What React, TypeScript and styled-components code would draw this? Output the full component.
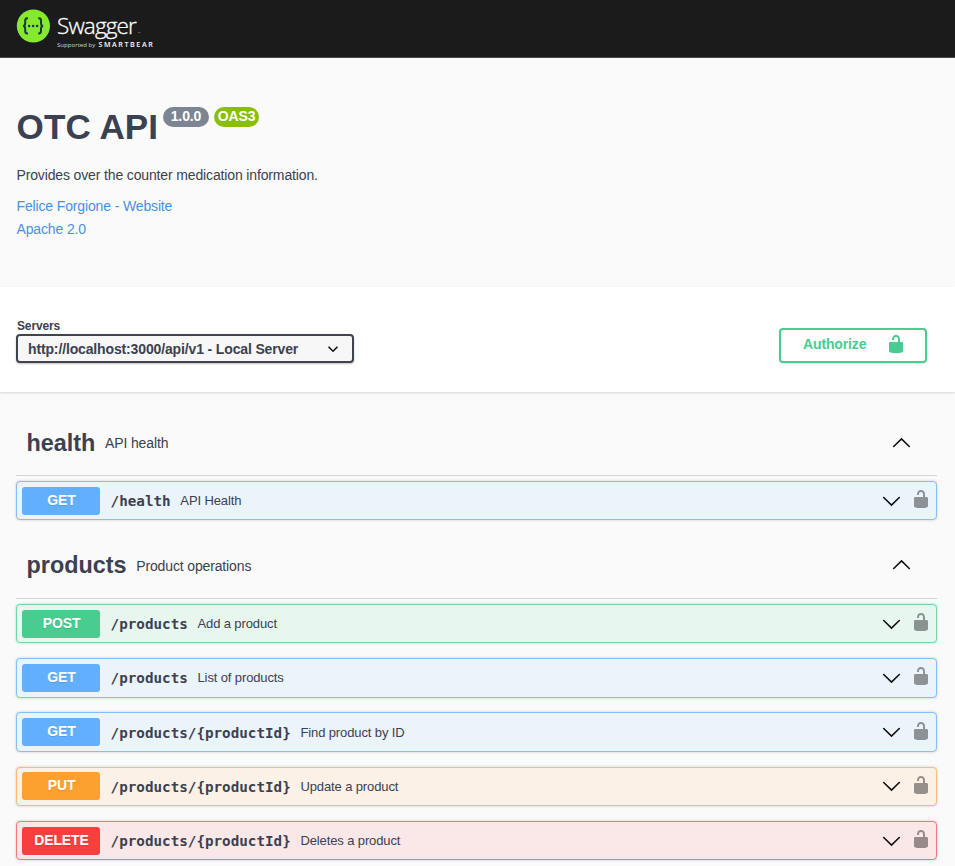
import React from "react";
import styled, { createGlobalStyle } from "styled-components";

const GlobalStyle = createGlobalStyle`
  *, *::before, *::after { box-sizing: border-box; }
  body {
    margin: 0;
    background: #fafafa;
    color: #3b4151;
    font-family: "Liberation Sans", Arial, sans-serif;
    overflow: hidden;
  }
`;

const Page = styled.div`
  height: 866px;
  overflow: hidden;
`;

const Topbar = styled.header`
  display: flex;
  height: 58px;
  padding: 9px 0 0 16px;
  background: #1b1b1b;
  border-bottom: 1px solid #4a474a;
`;

const Brand = styled.div`
  margin-left: 7px;
  font-family: "Open Sans", "Noto Sans", sans-serif;
  color: #fff;
  white-space: nowrap;
`;

const BrandName = styled.div`
  display: flex;
  align-items: baseline;
  height: 30px;
  font-size: 22.5px;
  font-weight: 300;
  line-height: 33px;
  letter-spacing: -0.85px;
  -webkit-text-stroke: 0.3px #fff;
`;

const Trademark = styled.span`
  margin-left: 2px;
  font-size: 3px;
  line-height: 3px;
  letter-spacing: 0;
  -webkit-text-stroke: 0;
`;

const Tagline = styled.div`
  display: flex;
  align-items: baseline;
  gap: 3px;
  font-size: 6px;
  line-height: 10px;
  letter-spacing: 0.05px;
  color: #d6d6d6;

  b {
    font-size: 7.1px;
    font-weight: 600;
    letter-spacing: 1.6px;
    color: #fff;
  }
`;

const Info = styled.section`
  height: 229px;
  padding: 48px 16px 0 16.5px;
`;

const TitleRow = styled.div`
  display: flex;
  height: 59px;
`;

const Title = styled.h1`
  width: 141.5px;
  margin: 0;
  font-size: 35.1px;
  line-height: 42px;
  letter-spacing: 0.1px;
  white-space: nowrap;
`;

const Badge = styled.span<{ $color: string; $width: number }>`
  width: ${(p) => p.$width}px;
  height: 20px;
  margin: 1px 0 0 5px;
  border-radius: 10px;
  background: ${(p) => p.$color};
  color: #fff;
  font-size: 14px;
  font-weight: 700;
  line-height: 18px;
  letter-spacing: -0.1px;
  text-align: center;
`;

const Description = styled.p`
  margin: 0 0 12px;
  font-size: 14px;
  line-height: 20px;
  letter-spacing: -0.14px;
`;

const InfoLink = styled.a`
  display: block;
  height: 23px;
  color: #4990e2;
  font-size: 14px;
  line-height: 18px;
  letter-spacing: -0.14px;
`;

const SchemeBar = styled.section`
  display: flex;
  justify-content: space-between;
  height: 105px;
  padding: 32px 28px 0 17px;
  background: #fff;
  box-shadow: 0 1px 2px rgba(0, 0, 0, 0.15);
`;

const Servers = styled.div`
  font-size: 12px;
  font-weight: 700;
  line-height: 14px;
  letter-spacing: -0.15px;
`;

const ServerSelect = styled.div`
  display: flex;
  align-items: center;
  justify-content: space-between;
  width: 338px;
  height: 29px;
  margin: 1px 0 0 -1px;
  padding: 1px 14px 0 10px;
  border: 2px solid #41444e;
  border-radius: 4px;
  background: #f7f7f7;
  box-shadow: 0 1px 2px rgba(0, 0, 0, 0.25);
  font-size: 14px;
  letter-spacing: -0.14px;
`;

const AuthorizeButton = styled.button`
  display: flex;
  align-items: flex-start;
  justify-content: space-between;
  width: 148px;
  height: 35px;
  margin-top: 9px;
  padding: 5px 22px 0 22px;
  border: 2px solid #49cc90;
  border-radius: 4px;
  background: #fff;
  box-shadow: 0 1px 2px rgba(0, 0, 0, 0.1);
  color: #49cc90;
  font: 700 14px/19px "Liberation Sans", Arial, sans-serif;
  letter-spacing: -0.14px;
`;

const Groups = styled.main`
  padding: 17px 18px 0 16px;
`;

const Group = styled.section`
  margin-bottom: 11.7px;
`;

const GroupHeader = styled.h2`
  display: flex;
  align-items: center;
  height: 67px;
  margin: 0 0 5px;
  padding: 0 26px 0 10.5px;
  border-bottom: 1px solid #d3d4d7;
  font-size: 23.4px;
  white-space: nowrap;
`;

const GroupName = styled.span`
  padding-top: 2px;
`;

const GroupDescription = styled.small`
  flex: 1;
  padding: 2px 0 0 9.7px;
  font-size: 14px;
  font-weight: 400;
  letter-spacing: -0.14px;
`;

const Operation = styled.div<{ $color: string; $fill: string }>`
  display: flex;
  align-items: center;
  height: 39.3px;
  padding: 0 8px 0 5px;
  border: 1px solid ${(p) => p.$color};
  border-radius: 4px;
  background: ${(p) => p.$fill};
  box-shadow: 0 0 3px rgba(0, 0, 0, 0.19);
  white-space: nowrap;

  & + & {
    margin-top: 14.95px;
  }
`;

const Method = styled.span<{ $color: string }>`
  width: 78px;
  height: 28px;
  padding-left: 1px;
  border-radius: 3px;
  background: ${(p) => p.$color};
  color: #fff;
  font-size: 14px;
  font-weight: 700;
  line-height: 27px;
  letter-spacing: -0.1px;
  text-align: center;
  text-shadow: 0 1px 0 rgba(0, 0, 0, 0.1);
`;

const Path = styled.span`
  margin-left: 10.6px;
  padding-top: 1px;
  font-family: "DejaVu Sans Mono", monospace;
  font-size: 14.25px;
  font-weight: 700;
`;

const Summary = styled.span`
  flex: 1;
  padding-left: 9.7px;
  font-size: 13px;
  letter-spacing: -0.12px;
`;

const RowChevron = styled.span`
  display: flex;
  padding-top: 1px;
`;

const LockSlot = styled.span`
  display: flex;
  margin: 0 0 3px 13px;
`;

interface ChevronProps {
  up?: boolean;
}

function Chevron({ up }: ChevronProps) {
  return (
    <svg width="19" height="11" viewBox="0 0 19 11" fill="none" stroke="#111" strokeWidth="1.6" strokeLinecap="round">
      <path d={up ? "M1.7 9.5 9.5 1.9 17.3 9.5" : "M1.7 1.5 9.5 9.1 17.3 1.5"} />
    </svg>
  );
}

function UnlockIcon({ color }: { color: string }) {
  return (
    <svg width="14" height="18" viewBox="3 1 14 18" fill={color}>
      <path d="M15.8 8H14V5.6C14 2.703 12.665 1 10 1 7.334 1 6 2.703 6 5.6V6h2v-.801C8 3.754 8.797 3 10 3c1.203 0 2 .754 2 2.199V8H4c-.553 0-1 .646-1 1.199V17c0 .549.428 1.139.951 1.307l1.197.387C5.672 18.861 6.55 19 7.1 19h5.8c.549 0 1.428-.139 1.951-.307l1.196-.387c.524-.167.953-.757.953-1.306V9.199C17 8.646 16.352 8 15.8 8z" />
    </svg>
  );
}

function SwaggerMark() {
  return (
    <svg width="34" height="34" viewBox="0 0 34 34">
      <circle cx="17.4" cy="17" r="16.6" fill="#85ea2d" />
      <g fill="none" stroke="#173647" strokeWidth="2">
        <path d="M12 9.3H11.3C9.7 9.3 9.2 10.2 9.2 11.7V14.3C9.2 16.1 8.5 16.9 7 16.9 8.5 16.9 9.2 17.7 9.2 19.5V22.1C9.2 23.6 9.7 24.5 11.3 24.5H12" />
        <path d="M22.2 9.3H22.9C24.5 9.3 25 10.2 25 11.7V14.3C25 16.1 25.7 16.9 27.2 16.9 25.7 16.9 25 17.7 25 19.5V22.1C25 23.6 24.5 24.5 22.9 24.5H22.2" />
      </g>
      <g fill="#173647">
        <circle cx="13.1" cy="16.9" r="1.25" />
        <circle cx="17.1" cy="16.9" r="1.25" />
        <circle cx="21.1" cy="16.9" r="1.25" />
      </g>
    </svg>
  );
}

const METHODS = {
  GET: { color: "#61affe", border: "#83bffb", fill: "#ebf3fb" },
  POST: { color: "#49cc90", border: "#72d5a7", fill: "#e8f6f0" },
  PUT: { color: "#fca130", border: "#f6bd71", fill: "#fbf1e6" },
  DELETE: { color: "#f93e3e", border: "#f77777", fill: "#fae7e7" },
};

interface Endpoint {
  method: keyof typeof METHODS;
  path: string;
  summary: string;
}

const GROUPS: { name: string; description: string; endpoints: Endpoint[] }[] = [
  {
    name: "health",
    description: "API health",
    endpoints: [{ method: "GET", path: "/health", summary: "API Health" }],
  },
  {
    name: "products",
    description: "Product operations",
    endpoints: [
      { method: "POST", path: "/products", summary: "Add a product" },
      { method: "GET", path: "/products", summary: "List of products" },
      { method: "GET", path: "/products/{productId}", summary: "Find product by ID" },
      { method: "PUT", path: "/products/{productId}", summary: "Update a product" },
      { method: "DELETE", path: "/products/{productId}", summary: "Deletes a product" },
    ],
  },
];

function EndpointRow({ method, path, summary }: Endpoint) {
  const theme = METHODS[method];
  return (
    <Operation $color={theme.border} $fill={theme.fill}>
      <Method $color={theme.color}>{method}</Method>
      <Path>{path}</Path>
      <Summary>{summary}</Summary>
      <RowChevron>
        <Chevron />
      </RowChevron>
      <LockSlot>
        <UnlockIcon color="rgba(0, 0, 0, 0.4)" />
      </LockSlot>
    </Operation>
  );
}

export default function App() {
  return (
    <Page>
      <GlobalStyle />
      <Topbar>
        <SwaggerMark />
        <Brand>
          <BrandName>
            Swagger<Trademark>™</Trademark>
          </BrandName>
          <Tagline>
            Supported by <b>SMARTBEAR</b>
          </Tagline>
        </Brand>
      </Topbar>
      <Info>
        <TitleRow>
          <Title>OTC API</Title>
          <Badge $color="#7d8492" $width={46}>1.0.0</Badge>
          <Badge $color="#89bf04" $width={45}>OAS3</Badge>
        </TitleRow>
        <Description>Provides over the counter medication information.</Description>
        <InfoLink>Felice Forgione - Website</InfoLink>
        <InfoLink>Apache 2.0</InfoLink>
      </Info>
      <SchemeBar>
        <Servers>
          Servers
          <ServerSelect>
            http://localhost:3000/api/v1 - Local Server
            <svg width="10" height="7" viewBox="0 0 10 7" fill="none" stroke="#111" strokeWidth="1.6" strokeLinecap="round">
              <path d="M1 1.2 5 5.2 9 1.2" />
            </svg>
          </ServerSelect>
        </Servers>
        <AuthorizeButton>
          Authorize
          <UnlockIcon color="#49cc90" />
        </AuthorizeButton>
      </SchemeBar>
      <Groups>
        {GROUPS.map((group) => (
          <Group key={group.name}>
            <GroupHeader>
              <GroupName>{group.name}</GroupName>
              <GroupDescription>{group.description}</GroupDescription>
              <Chevron up />
            </GroupHeader>
            {group.endpoints.map((endpoint) => (
              <EndpointRow key={endpoint.method + endpoint.path} {...endpoint} />
            ))}
          </Group>
        ))}
      </Groups>
    </Page>
  );
}
